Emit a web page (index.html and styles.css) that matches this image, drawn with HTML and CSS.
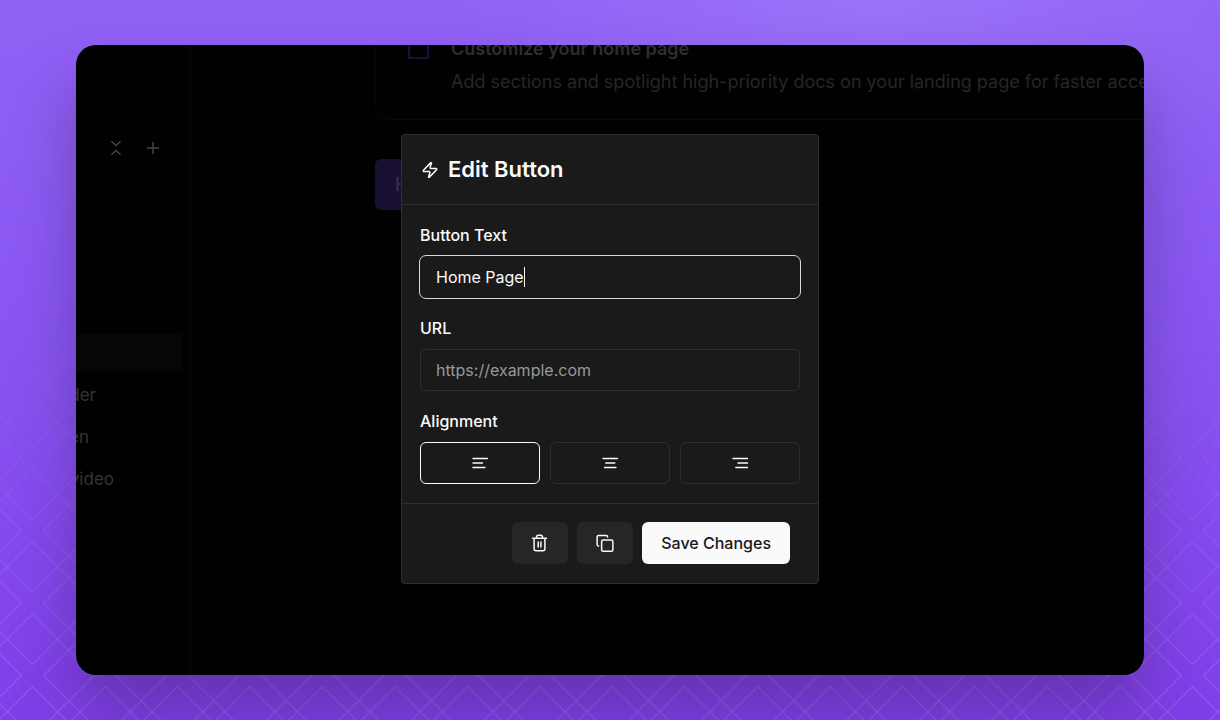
FILE: index.html
```html
<!DOCTYPE html>
<html lang="en">
<head>
<meta charset="utf-8">
<meta name="viewport" content="width=device-width, initial-scale=1">
<title>Edit Button</title>
<link rel="stylesheet" href="styles.css">
</head>
<body>
<svg class="backdrop" aria-hidden="true">
  <defs>
    <pattern id="lattice" width="72.5" height="72.5" patternUnits="userSpaceOnUse" x="-3.75" y="-13.25">
      <g fill="none" stroke="#fff" stroke-width="1.2">
        <path d="M36.25 -25.15l61.4 61.4l-61.4 61.4l-61.4 -61.4z"/>
        <path d="M-36.25 -25.15l61.4 61.4l-61.4 61.4l-61.4 -61.4z"/>
        <path d="M108.75 -25.15l61.4 61.4l-61.4 61.4l-61.4 -61.4z"/>
        <path d="M36.25 -97.65l61.4 61.4l-61.4 61.4l-61.4 -61.4z"/>
        <path d="M36.25 47.35l61.4 61.4l-61.4 61.4l-61.4 -61.4z"/>
        <path d="M-36.25 -97.65l61.4 61.4l-61.4 61.4l-61.4 -61.4z"/>
        <path d="M108.75 -97.65l61.4 61.4l-61.4 61.4l-61.4 -61.4z"/>
        <path d="M-36.25 47.35l61.4 61.4l-61.4 61.4l-61.4 -61.4z"/>
        <path d="M108.75 47.35l61.4 61.4l-61.4 61.4l-61.4 -61.4z"/>
      </g>
    </pattern>
  </defs>
  <rect width="100%" height="100%" fill="url(#lattice)"/>
</svg>
<div class="window">
  <aside class="sidebar">
    <div class="tools">
      <button class="tool" type="button" aria-label="Collapse all">
        <svg width="18" height="18" viewBox="0 0 18 18" fill="none" stroke="currentColor" stroke-width="1.5"><path d="M4.500 2.200l4.500 4.300l4.500 -4.300M4.500 15.800l4.500 -4.300l4.500 4.300"/></svg>
      </button>
      <button class="tool" type="button" aria-label="Add">
        <svg width="18" height="18" viewBox="0 0 18 18" fill="none" stroke="currentColor" stroke-width="1.5"><path d="M9 3v12M3 9h12"/></svg>
      </button>
    </div>
    <nav class="nav">
      <a class="nav-item active" href="#" aria-label="Current page"></a>
      <a class="nav-item" href="#"><span class="clip short">der</span></a>
      <a class="nav-item" href="#"><span class="clip tiny">en</span></a>
      <a class="nav-item" href="#"><span class="clip long">video</span></a>
    </nav>
  </aside>
  <main class="main">
    <div class="task">
      <input class="check" type="checkbox" id="customize">
      <div class="task-text">
        <label class="task-title" for="customize">Customize your home page</label>
        <p class="task-desc">Add sections and spotlight high-priority docs on your landing page for faster access</p>
      </div>
    </div>
    <button class="page-button" type="button">Home Page</button>
  </main>
  <div class="overlay">
    <form class="modal" role="dialog" aria-labelledby="modal-title">
      <header class="modal-head">
        <svg width="18" height="18" viewBox="0 0 24 24" fill="none" stroke="currentColor" stroke-width="2" stroke-linecap="round" stroke-linejoin="round" aria-hidden="true"><path d="M4 14a1 1 0 0 1-.78-1.63l9.900-10.200a.5.5 0 0 1 .86.46l-1.920 6.020A1 1 0 0 0 13 10h7a1 1 0 0 1 .78 1.630l-9.900 10.200a.5.5 0 0 1-.86-.46l1.920-6.020A1 1 0 0 0 11 14z"/></svg>
        <h1 class="modal-title" id="modal-title">Edit Button</h1>
      </header>
      <div class="modal-body">
        <div class="field">
          <label class="label" for="text">Button Text</label>
          <div class="box focused"><input class="input fit" id="text" type="text" value="Home Page"><span class="caret"></span></div>
        </div>
        <div class="field">
          <label class="label" for="url">URL</label>
          <div class="box"><input class="input grow" id="url" type="url" placeholder="https://example.com"></div>
        </div>
        <div class="field" role="group" aria-labelledby="align">
          <span class="label" id="align">Alignment</span>
          <div class="aligns">
            <button class="align selected" type="button" aria-label="Left">
              <svg width="18" height="12" viewBox="0 0 18 12" stroke="currentColor" stroke-width="1.4" stroke-linecap="round"><path d="M2 1.500h14.500M2 6h9.500M2 10.500h12"/></svg>
            </button>
            <button class="align" type="button" aria-label="Center">
              <svg width="18" height="12" viewBox="0 0 18 12" stroke="currentColor" stroke-width="1.4" stroke-linecap="round"><path d="M2 1.500h14.500M4.800 6h9M3.500 10.500h11.500"/></svg>
            </button>
            <button class="align" type="button" aria-label="Right">
              <svg width="18" height="12" viewBox="0 0 18 12" stroke="currentColor" stroke-width="1.4" stroke-linecap="round"><path d="M2 1.500h14.500M7 6h9.500M4.800 10.500h11.700"/></svg>
            </button>
          </div>
        </div>
      </div>
      <footer class="modal-foot">
        <button class="btn icon-btn" type="button" aria-label="Delete">
          <svg width="18" height="18" viewBox="0 0 18 18" fill="none" stroke="currentColor" stroke-width="1.5" stroke-linecap="round" stroke-linejoin="round"><path d="M1.500 4.200h14M3.100 4.200v10.600a2 2 0 0 0 2 2h6.800a2 2 0 0 0 2 -2v-10.600M5.500 4.200v-1a2 2 0 0 1 2 -2h2a2 2 0 0 1 2 2v1M7.200 8v5M9.900 8v5"/></svg>
        </button>
        <button class="btn icon-btn" type="button" aria-label="Duplicate">
          <svg width="18" height="18" viewBox="0 0 24 24" fill="none" stroke="currentColor" stroke-width="2" stroke-linecap="round" stroke-linejoin="round"><rect x="7.500" y="8" width="15" height="15" rx="2"/><path d="M3.500 16c-1.100 0-2-.9-2-2V4c0-1.100.9-2 2-2h10c1.100 0 2 .9 2 2"/></svg>
        </button>
        <button class="btn save" type="submit">Save Changes</button>
      </footer>
    </form>
  </div>
</div>
</body>
</html>
```
FILE: styles.css
```css
* { box-sizing: border-box; margin: 0; }

body {
  display: flex;
  min-height: 100vh;
  padding: 45px 76px;
  overflow: hidden;
  font-family: Inter, "Liberation Sans", sans-serif;
  font-size: 16px;
  line-height: 20px;
  color: #fafafa;
  background:
    radial-gradient(ellipse 420px 260px at 72% 0, rgba(166, 132, 250, .45), rgba(166, 132, 250, 0)),
    linear-gradient(#9162f6, #8854f1 50%, #803ee9);
}

button, input { font: inherit; color: inherit; }
button { padding: 0; border: 0; background: none; }
button svg { display: block; }

.backdrop {
  position: absolute;
  inset: 0;
  width: 100%;
  height: 100%;
  opacity: .14;
  -webkit-mask-image: linear-gradient(transparent 42%, #000);
  mask-image: linear-gradient(transparent 42%, #000);
}

.window {
  position: relative;
  display: flex;
  flex: 1;
  min-width: 0;
  overflow: hidden;
  border-radius: 20px;
  background: #010101;
  box-shadow: 0 36px 60px rgba(50, 30, 80, .36);
}

.sidebar {
  flex: none;
  width: 115px;
  border-right: 1px solid #0a0a0a;
  padding-top: 94px;
  color: #353535;
}

.tools { display: flex; gap: 19px; padding-left: 31px; }
.tool { color: #454545; }

.nav { display: grid; gap: 4px; padding-top: 177px; }
.nav-item {
  display: flex;
  align-items: center;
  height: 38px;
  margin-right: 7px;
  border-radius: 4px;
  font-size: 17px;
  color: inherit;
  text-decoration: none;
}
.nav-item.active { background: #060606; }
.clip { display: flex; justify-content: flex-end; }
.clip.short { width: 20px; }
.clip.tiny { width: 13px; }
.clip.long { width: 38px; }

.main {
  flex: 1;
  min-width: 0;
  padding-left: 184px;
  font-size: 18px;
  color: #262626;
}
.task {
  display: flex;
  gap: 22px;
  height: 75px;
  padding-left: 32px;
  border: 1px solid #080808;
  border-width: 0 0 1px 1px;
  border-bottom-left-radius: 14px;
  white-space: nowrap;
}
.check {
  flex: none;
  appearance: none;
  width: 21px;
  height: 14px;
  border: 2px solid #17123a;
  border-top: 0;
}
.task-text { margin-top: -8px; }
.task-title { display: block; font-weight: 600; line-height: 24px; color: #2e2e2e; }
.task-desc { margin-top: 9px; line-height: 24px; }
.page-button {
  margin-top: 39px;
  height: 51px;
  padding: 0 20px;
  border-radius: 6px;
  background: #190f33;
  color: #342e48;
  font-weight: 600;
}

.overlay {
  position: absolute;
  inset: 0;
  display: flex;
  align-items: center;
  justify-content: center;
  padding-bottom: 2px;
}
.modal {
  width: 418px;
  border: 1px solid #2e2e30;
  border-radius: 4px;
  background: #1a1a1b;
}
.modal-head {
  display: flex;
  align-items: center;
  gap: 9px;
  padding: 20px 19px;
  border-bottom: 1px solid #2e2e30;
}
.modal-title { font-size: 22px; line-height: 29px; font-weight: 600; }

.modal-body { display: grid; gap: 20px; padding: 20px 18px 19px 18px; }
.field { display: grid; gap: 11px; }
.label { font-weight: 500; }
.box {
  display: flex;
  align-items: center;
  height: 42px;
  padding: 0 15px;
  border: 1px solid #2e2e30;
  border-radius: 6px;
}
.box.focused { border-color: transparent; outline: 1px solid #d8d8da; }
.input { padding: 0; border: 0; outline: 0; background: none; }
.input.fit { field-sizing: content; }
.input.grow { flex: 1; min-width: 0; }
.input::placeholder { color: #98989c; opacity: 1; }
.caret { width: 1px; height: 20px; background: #fafafa; }

.aligns { display: grid; grid-template-columns: repeat(3, 1fr); gap: 10px; }
.align {
  display: flex;
  align-items: center;
  justify-content: center;
  height: 42px;
  border: 1px solid #2e2e30;
  border-radius: 6px;
}
.align.selected { border-color: #fafafa; }

.modal-foot {
  display: flex;
  justify-content: flex-end;
  gap: 9px;
  padding: 18px 28px 19px;
  border-top: 1px solid #2e2e30;
}
.btn {
  display: flex;
  align-items: center;
  justify-content: center;
  height: 42px;
  border-radius: 6px;
}
.icon-btn { width: 56px; background: #262628; }
.save { padding: 0 19px; background: #fafafa; color: #18181b; font-weight: 500; }
```
